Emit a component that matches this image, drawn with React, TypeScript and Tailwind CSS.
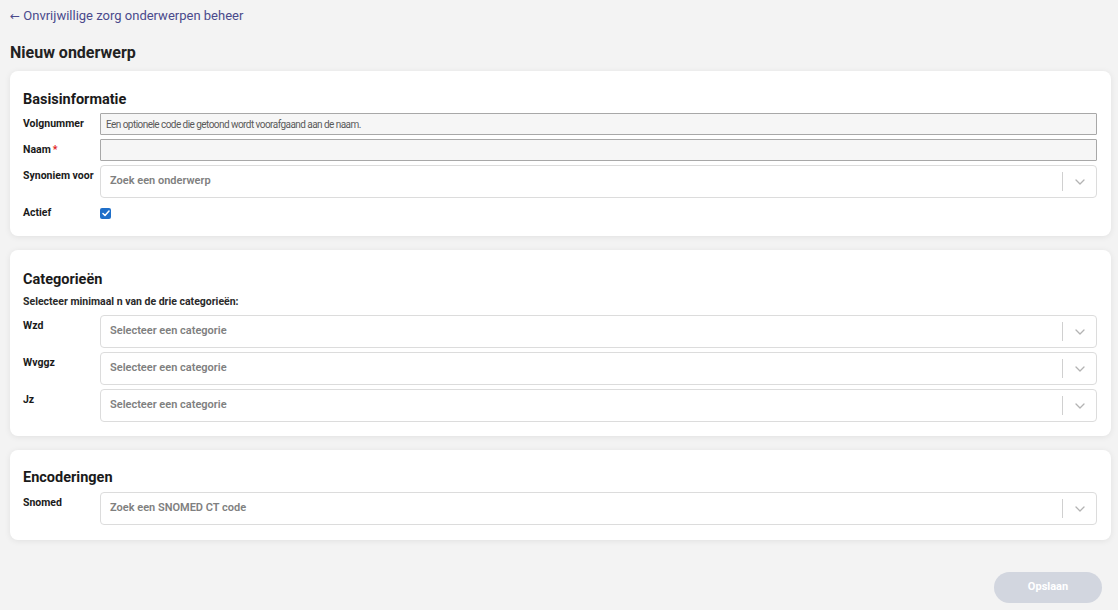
import React from "react";

const font = { fontFamily: "Roboto, 'Noto Sans', sans-serif" };

function Chevron() {
  return (
    <svg width="10" height="6" viewBox="0 0 10 6" fill="none">
      <path d="M1 1l4 4 4-4" stroke="#b3b3b3" strokeWidth="1.3" strokeLinecap="round" strokeLinejoin="round" />
    </svg>
  );
}

function Select({ placeholder }: { placeholder: string }) {
  return (
    <div className="flex h-[33px] flex-1 items-center rounded-[4px] border border-[#dcdcdc] bg-white">
      <span className="flex-1 pl-[9px] text-[11px] font-semibold text-[#808080]">{placeholder}</span>
      <span className="h-[19px] w-px bg-[#d0d0d0]" />
      <span className="flex w-[33px] justify-center">
        <Chevron />
      </span>
    </div>
  );
}

function Input({ placeholder }: { placeholder?: string }) {
  return (
    <div className="flex h-[22px] flex-1 items-center rounded-[1px] border border-[#a8a8a8] bg-[#f6f6f6] px-[5px] text-[10px] tracking-[-0.55px] text-[#5a5a5a]">
      {placeholder}
    </div>
  );
}

function Row({ label, children, required }: { label: string; children: React.ReactNode; required?: boolean }) {
  return (
    <div className="flex">
      <div className="w-[77px] shrink-0 pt-[4px] text-[10.5px] font-bold leading-[14px] text-[#1a1a1a]">
        {label}
        {required && <span className="ml-[2px] text-[#e02020]">*</span>}
      </div>
      {children}
    </div>
  );
}

function Card({ children, className }: { children: React.ReactNode; className?: string }) {
  return (
    <div className={"rounded-[8px] bg-white pl-[13px] pr-[14px] shadow-[0_1px_6px_rgba(0,0,0,0.08)] " + (className ?? "")}>
      {children}
    </div>
  );
}

export default function App() {
  return (
    <div style={font} className="min-h-[610px] bg-[#f3f3f3] pl-[10px] pr-[7px] pt-[8px] text-[#1a1a1a]">
      <div className="text-[13px] leading-[16px] text-[#4a4a8c]">
        <span style={{ fontFamily: "'DejaVu Sans', sans-serif" }} className="text-[12px]">←</span> Onvrijwillige zorg onderwerpen beheer
      </div>
      <h1 className="mt-[19px] text-[16px] font-bold leading-[20px] text-[#222]">Nieuw onderwerp</h1>
      <div className="mt-[8px] flex flex-col gap-[14px]">
        <Card className="pb-[16px] pt-[19px]">
          <h2 className="text-[14.5px] font-bold leading-[20px]">Basisinformatie</h2>
          <div className="mt-[3px] flex flex-col gap-[4px]">
            <Row label="Volgnummer">
              <Input placeholder="Een optionele code die getoond wordt voorafgaand aan de naam." />
            </Row>
            <Row label="Naam" required>
              <Input />
            </Row>
            <Row label="Synoniem voor">
              <Select placeholder="Zoek een onderwerp" />
            </Row>
            <div className="flex items-center pt-[4px]">
              <div className="w-[77px] text-[10.5px] font-bold leading-[14px]">Actief</div>
              <div className="flex h-[11px] w-[11px] items-center justify-center rounded-[2px] bg-[#1f6fc9]">
                <svg width="8" height="7" viewBox="0 0 8 7" fill="none">
                  <path d="M1 3.5l2 2 4-4.5" stroke="white" strokeWidth="1.5" strokeLinecap="round" strokeLinejoin="round" />
                </svg>
              </div>
            </div>
          </div>
        </Card>
        <Card className="pb-[14px] pt-[20px]">
          <h2 className="text-[14.5px] font-bold leading-[20px]">Categorieën</h2>
          <div className="mt-[5px] text-[10.5px] font-bold leading-[14px] text-[#2a2a2a]">
            Selecteer minimaal n van de drie categorieën:
          </div>
          <div className="mt-[6px] flex flex-col gap-[4px]">
            <Row label="Wzd">
              <Select placeholder="Selecteer een categorie" />
            </Row>
            <Row label="Wvggz">
              <Select placeholder="Selecteer een categorie" />
            </Row>
            <Row label="Jz">
              <Select placeholder="Selecteer een categorie" />
            </Row>
          </div>
        </Card>
        <Card className="pb-[15px] pt-[18px]">
          <h2 className="text-[14.5px] font-bold leading-[20px]">Encoderingen</h2>
          <div className="mt-[4px]">
            <Row label="Snomed">
              <Select placeholder="Zoek een SNOMED CT code" />
            </Row>
          </div>
        </Card>
      </div>
      <div className="mt-[32px] flex justify-end pr-[9px]">
        <button className="h-[31px] w-[108px] rounded-full bg-[#d2d6df] text-[11px] font-bold text-white">Opslaan</button>
      </div>
    </div>
  );
}
